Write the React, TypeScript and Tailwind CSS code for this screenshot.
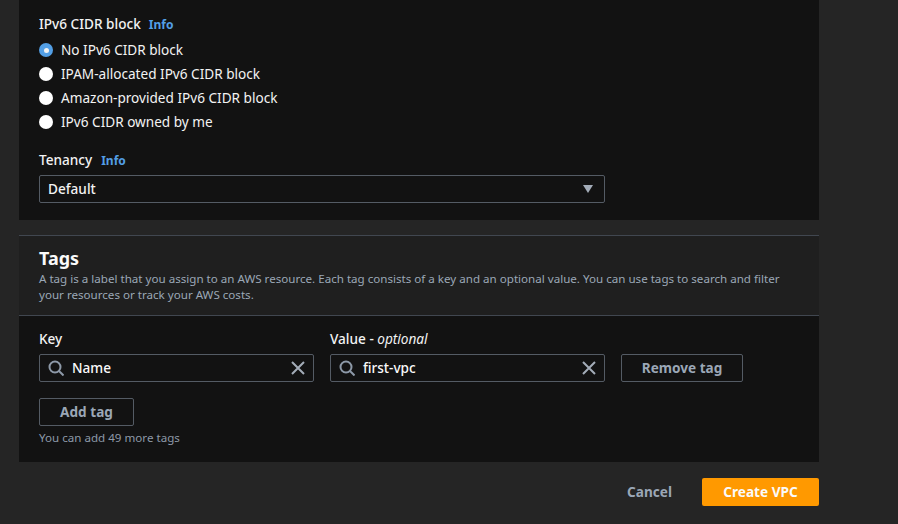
import React from "react";

const font = { fontFamily: '"Noto Sans", "Open Sans", sans-serif' };

function Search() {
  return (
    <svg width="16" height="16" viewBox="0 0 16 16" fill="none" stroke="#8d99a8" strokeWidth="2" className="shrink-0">
      <circle cx="7" cy="7" r="5.5" />
      <path d="M11 11l4.5 4.5" />
    </svg>
  );
}

function Close() {
  return (
    <svg width="16" height="16" viewBox="0 0 16 16" fill="none" stroke="#a3acb8" strokeWidth="2" className="shrink-0">
      <path d="M2 2l12 12M14 2L2 14" />
    </svg>
  );
}

function Radio({ label, checked }: { label: string; checked?: boolean }) {
  return (
    <div className="flex h-6 items-center gap-[8px]">
      {checked ? (
        <span className="flex h-[14px] w-[14px] items-center justify-center rounded-full bg-[#539fe5]">
          <span className="h-[5px] w-[5px] rounded-full bg-[#f2f3f3]" />
        </span>
      ) : (
        <span className="h-[14px] w-[14px] rounded-full bg-white" />
      )}
      <span className="text-[13.6px] leading-6 text-[#f2f3f3]">{label}</span>
    </div>
  );
}

function Field({ value }: { value: string }) {
  return (
    <div className="flex h-[28px] items-center rounded-[2px] border border-[#545b64] bg-[#121212] pl-2 pr-[7px]">
      <Search />
      <span className="ml-[8px] flex-1 text-[13.6px] font-medium text-[#fafafa]">{value}</span>
      <Close />
    </div>
  );
}

export default function App() {
  return (
    <div className="h-[524px] w-[898px] overflow-hidden bg-[#252525] pl-[19px]" style={font}>
      <div className="w-[800px]">
        <section className="h-[220px] bg-[#121212] pl-5 pt-[14px]">
          <div className="flex h-5 items-center gap-[8px]">
            <span className="text-[13.6px] font-medium text-[#f2f3f3]">IPv6 CIDR block</span>
            <span className="mt-[1px] text-[12px] font-bold text-[#539fe5]">Info</span>
          </div>
          <div className="mt-1">
            <Radio label="No IPv6 CIDR block" checked />
            <Radio label="IPAM-allocated IPv6 CIDR block" />
            <Radio label="Amazon-provided IPv6 CIDR block" />
            <Radio label="IPv6 CIDR owned by me" />
          </div>
          <div className="mt-[16px] flex h-5 items-center gap-[9px]">
            <span className="text-[13.6px] font-medium text-[#f2f3f3]">Tenancy</span>
            <span className="mt-[1px] text-[12px] font-bold text-[#539fe5]">Info</span>
          </div>
          <div className="mt-[5px] flex h-[28px] w-[566px] items-center justify-between rounded-[2px] border border-[#545b64] bg-[#121212] pl-2 pr-[10px]">
            <span className="text-[13.6px] font-medium text-[#f2f3f3]">Default</span>
            <svg width="12" height="10" viewBox="0 0 12 10" fill="#a3acb8"><path d="M1 1h10L6 9z" /></svg>
          </div>
        </section>

        <section className="mt-[15px] h-[227px] border-t border-[#414750] bg-[#121212]">
          <div className="h-[80px] border-b border-[#414750] bg-[#1f1f1f] pl-5 pr-4 pt-[9px]">
            <h2 className="text-[18px] font-bold leading-[26px] text-[#fafafa]">Tags</h2>
            <p className="text-[11.6px] leading-4 text-[#9ba7b6]">
              A tag is a label that you assign to an AWS resource. Each tag consists of a key and an optional value. You can use tags to search and filter your resources or track your AWS costs.
            </p>
          </div>
          <div className="pl-5 pt-[13px]">
            <div className="flex items-end gap-4">
              <div className="w-[275px]">
                <div className="mb-[5px] h-5 text-[13.6px] font-medium leading-5 text-[#f2f3f3]">Key</div>
                <Field value="Name" />
              </div>
              <div className="w-[275px]">
                <div className="mb-[5px] h-5 text-[13.6px] font-medium leading-5 text-[#f2f3f3]">
                  Value - <i className="font-normal">optional</i>
                </div>
                <Field value="first-vpc" />
              </div>
              <button className="h-[28px] w-[122px] rounded-[2px] border border-[#545b64] text-[13.6px] font-bold text-[#9ba7b6]">Remove tag</button>
            </div>
            <button className="mt-4 block h-[28px] w-[95px] rounded-[2px] border border-[#545b64] text-[13.6px] font-bold text-[#9ba7b6]">Add tag</button>
            <p className="mt-[4px] text-[11.6px] leading-4 text-[#8d99a8]">You can add 49 more tags</p>
          </div>
        </section>

        <div className="mt-4 flex items-center justify-end">
          <span className="mr-[30px] text-[13.6px] font-bold text-[#9ba7b6]">Cancel</span>
          <button className="h-[28px] w-[117px] rounded-[2px] bg-[#ff9900] text-[13.6px] font-bold text-[#fafafa]">Create VPC</button>
        </div>
      </div>
    </div>
  );
}
